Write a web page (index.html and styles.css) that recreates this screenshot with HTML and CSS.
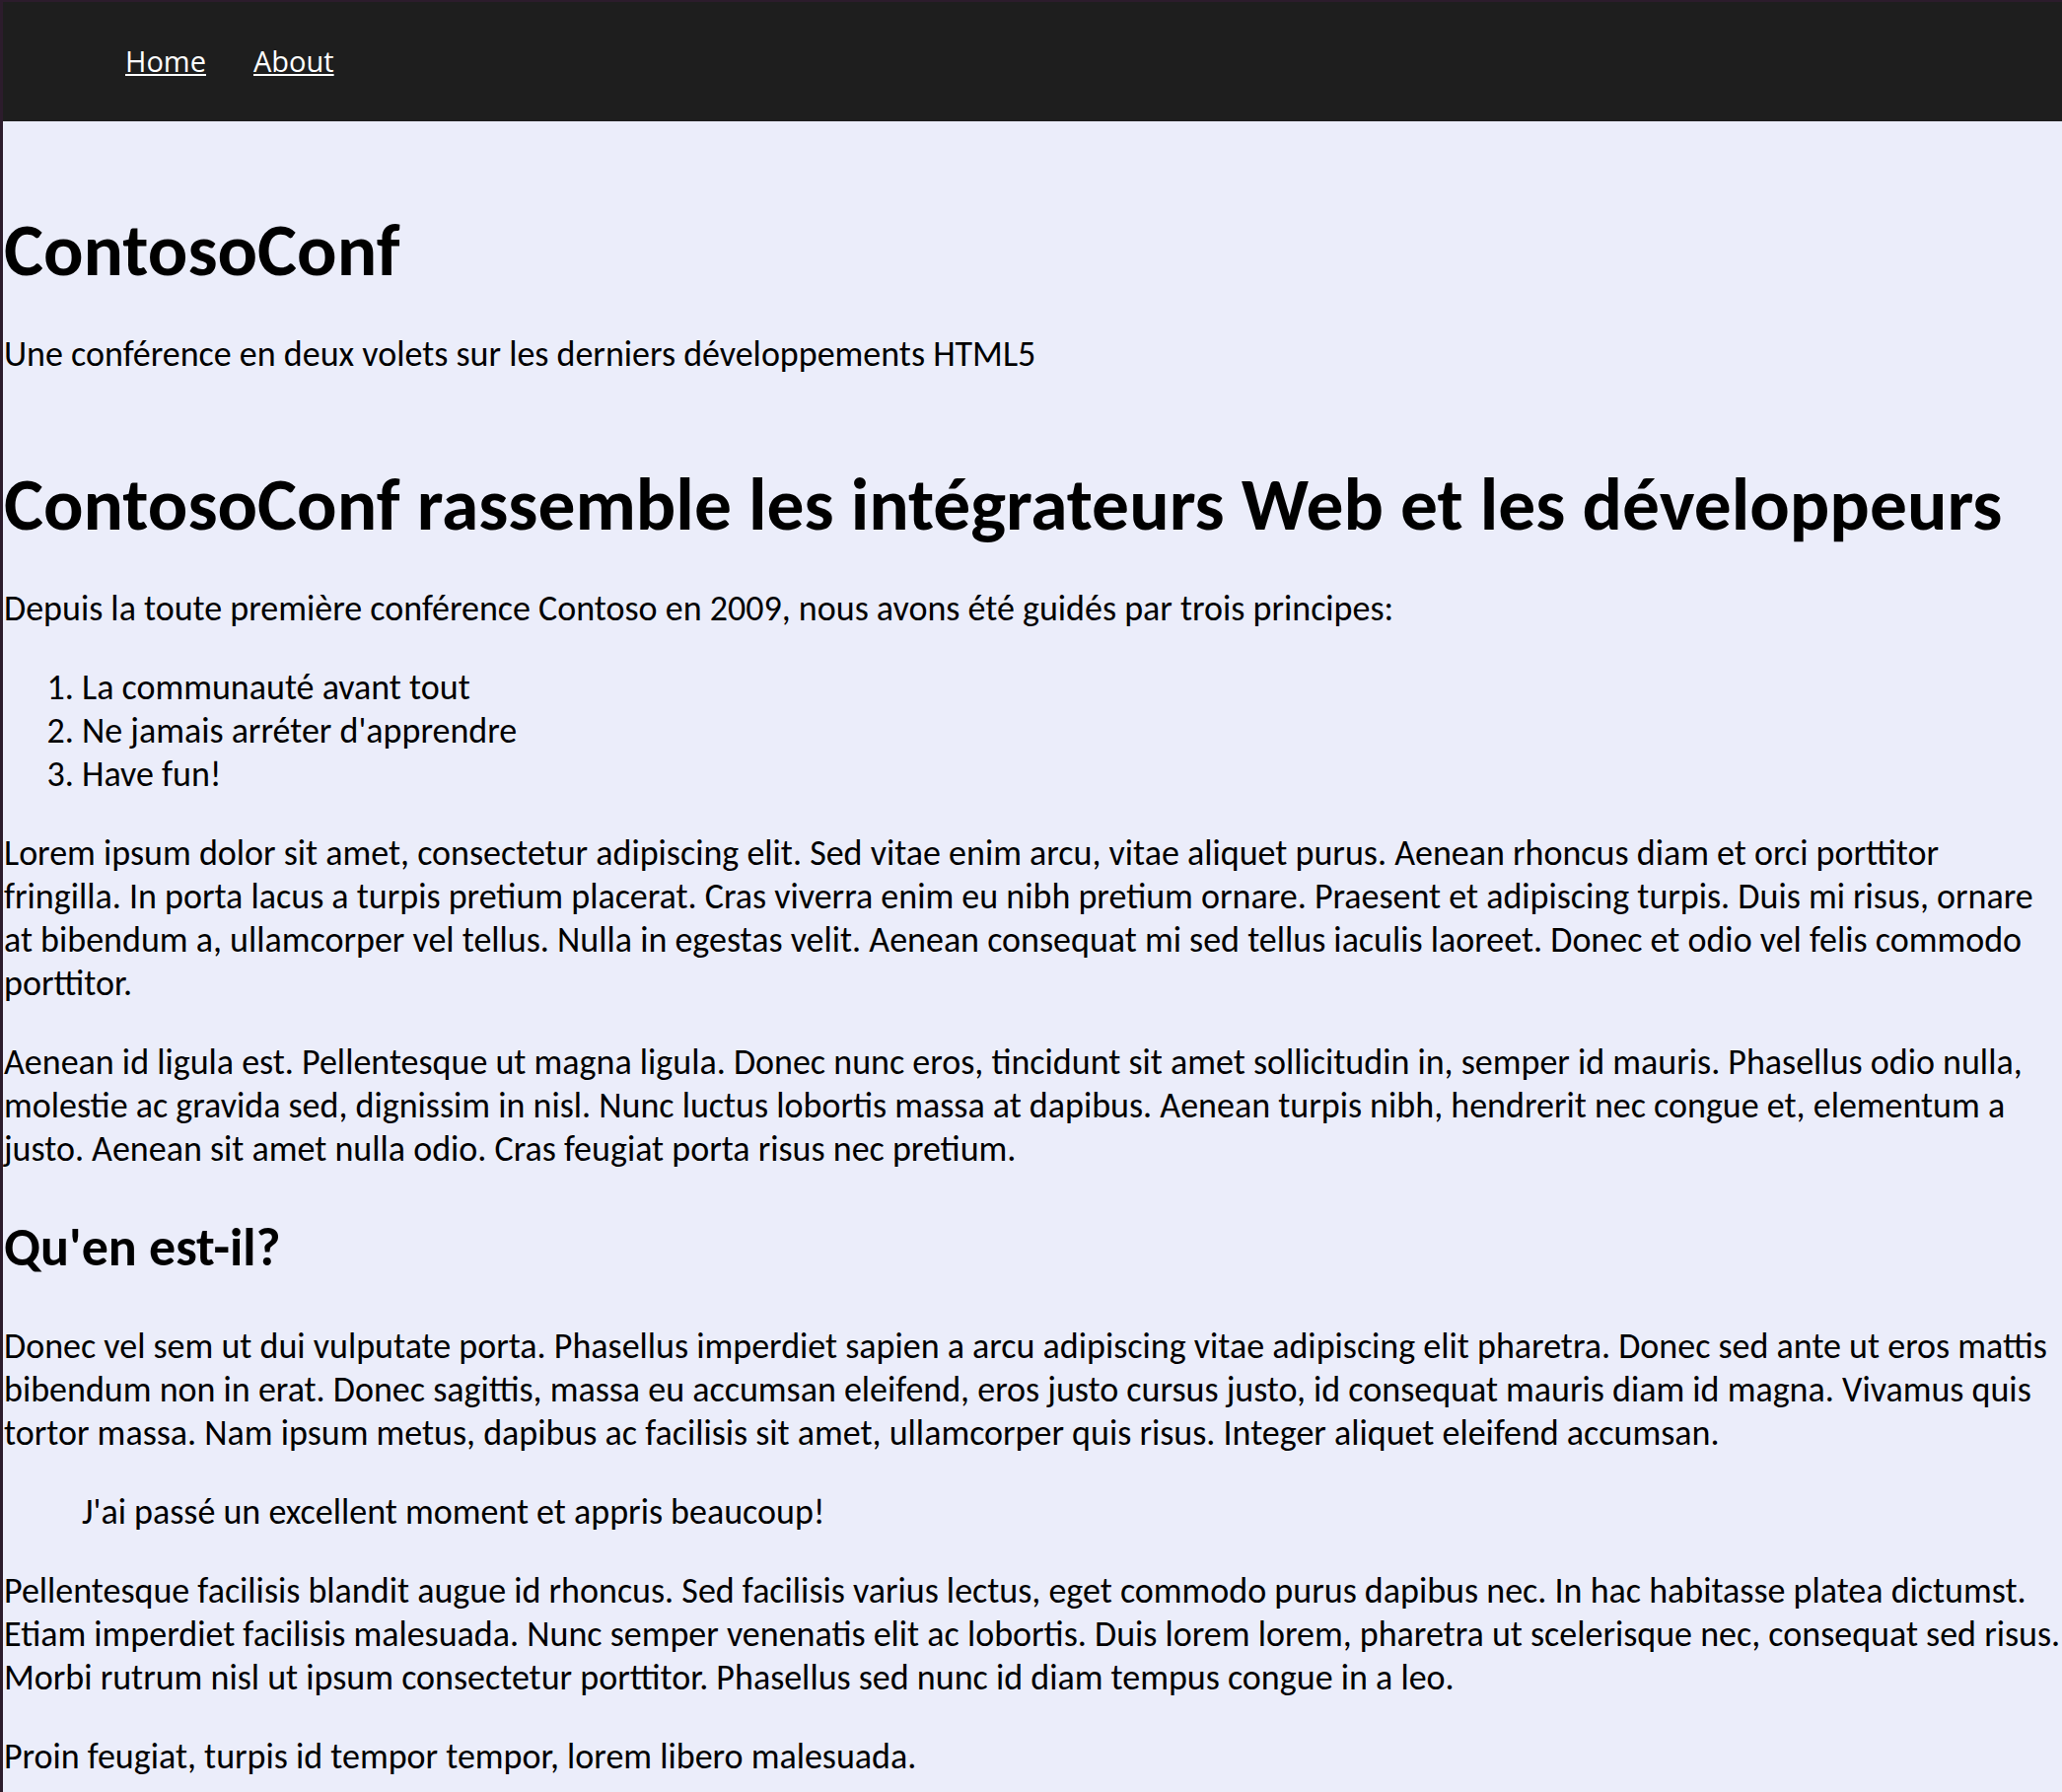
FILE: index.html
```html
<!DOCTYPE html>
<html lang="fr">
<head>
<meta charset="utf-8">
<title>ContosoConf</title>
<link rel="stylesheet" href="styles.css">
</head>
<body>
<header class="site-nav">
  <nav class="nav-links">
    <a href="#">Home</a>
    <a href="#">About</a>
  </nav>
</header>
<main class="content">
  <h1 class="title">ContosoConf</h1>
  <p>Une conférence en deux volets sur les derniers développements HTML5</p>
  <h2 class="headline">ContosoConf rassemble les intégrateurs Web et les développeurs</h2>
  <p>Depuis la toute première conférence Contoso en 2009, nous avons été guidés par trois principes:</p>
  <ol class="principles">
    <li>La communauté avant tout</li>
    <li>Ne jamais arréter d'apprendre</li>
    <li>Have fun!</li>
  </ol>
  <p>Lorem ipsum dolor sit amet, consectetur adipiscing elit. Sed vitae enim arcu, vitae aliquet purus. Aenean rhoncus diam et orci porttitor fringilla. In porta lacus a turpis pretium placerat. Cras viverra enim eu nibh pretium ornare. Praesent et adipiscing turpis. Duis mi risus, ornare at bibendum a, ullamcorper vel tellus. Nulla in egestas velit. Aenean consequat mi sed tellus iaculis laoreet. Donec et odio vel felis commodo porttitor.</p>
  <p>Aenean id ligula est. Pellentesque ut magna ligula. Donec nunc eros, tincidunt sit amet sollicitudin in, semper id mauris. Phasellus odio nulla, molestie ac gravida sed, dignissim in nisl. Nunc luctus lobortis massa at dapibus. Aenean turpis nibh, hendrerit nec congue et, elementum a justo. Aenean sit amet nulla odio. Cras feugiat porta risus nec pretium.</p>
  <h3 class="subhead">Qu'en est-il?</h3>
  <p>Donec vel sem ut dui vulputate porta. Phasellus imperdiet sapien a arcu adipiscing vitae adipiscing elit pharetra. Donec sed ante ut eros mattis bibendum non in erat. Donec sagittis, massa eu accumsan eleifend, eros justo cursus justo, id consequat mauris diam id magna. Vivamus quis tortor massa. Nam ipsum metus, dapibus ac facilisis sit amet, ullamcorper quis risus. Integer aliquet eleifend accumsan.</p>
  <blockquote class="quote">J'ai passé un excellent moment et appris beaucoup!</blockquote>
  <p>Pellentesque facilisis blandit augue id rhoncus. Sed facilisis varius lectus, eget commodo purus dapibus nec. In hac habitasse platea dictumst. Etiam imperdiet facilisis malesuada. Nunc semper venenatis elit ac lobortis. Duis lorem lorem, pharetra ut scelerisque nec, consequat sed risus. Morbi rutrum nisl ut ipsum consectetur porttitor. Phasellus sed nunc id diam tempus congue in a leo.</p>
  <p>Proin feugiat, turpis id tempor tempor, lorem libero malesuada.</p>
</main>
</body>
</html>
```
FILE: styles.css
```css
html {
  background: #ebedfa;
}
body {
  margin: 0;
  min-height: 100vh;
  border-left: 3px solid #2c1c2c;
  border-top: 2px solid #2c1c2c;
  background: #ebedfa;
  color: #000;
  font-family: Carlito, Calibri, "Liberation Sans Narrow", sans-serif;
  font-size: 36px;
  line-height: 44px;
}
.site-nav {
  background: #1e1e1e;
  height: 121px;
  display: flex;
  align-items: center;
  padding-left: 124px;
}
.nav-links {
  display: flex;
  gap: 48px;
  font-family: "Open Sans", sans-serif;
  font-size: 29px;
  line-height: 40px;
  margin-top: -2px;
}
.nav-links a {
  color: #fff;
  text-decoration: underline;
}
.content {
  padding-left: 1px;
  padding-top: 1px;
}
.content p {
  margin: 36px 0;
}
.title, .headline {
  font-size: 75.5px;
  line-height: 96px;
  font-weight: 700;
}
.title {
  margin: 81px 0 36px;
}
.headline {
  margin: 82px 0 36px;
}
.subhead {
  font-size: 54px;
  line-height: 64px;
  font-weight: 700;
  margin: 46px 0 46px;
}
.principles {
  margin: 36px 0;
  padding-left: 79px;
}
.quote {
  margin: 36px 0 36px 79px;
}
```
